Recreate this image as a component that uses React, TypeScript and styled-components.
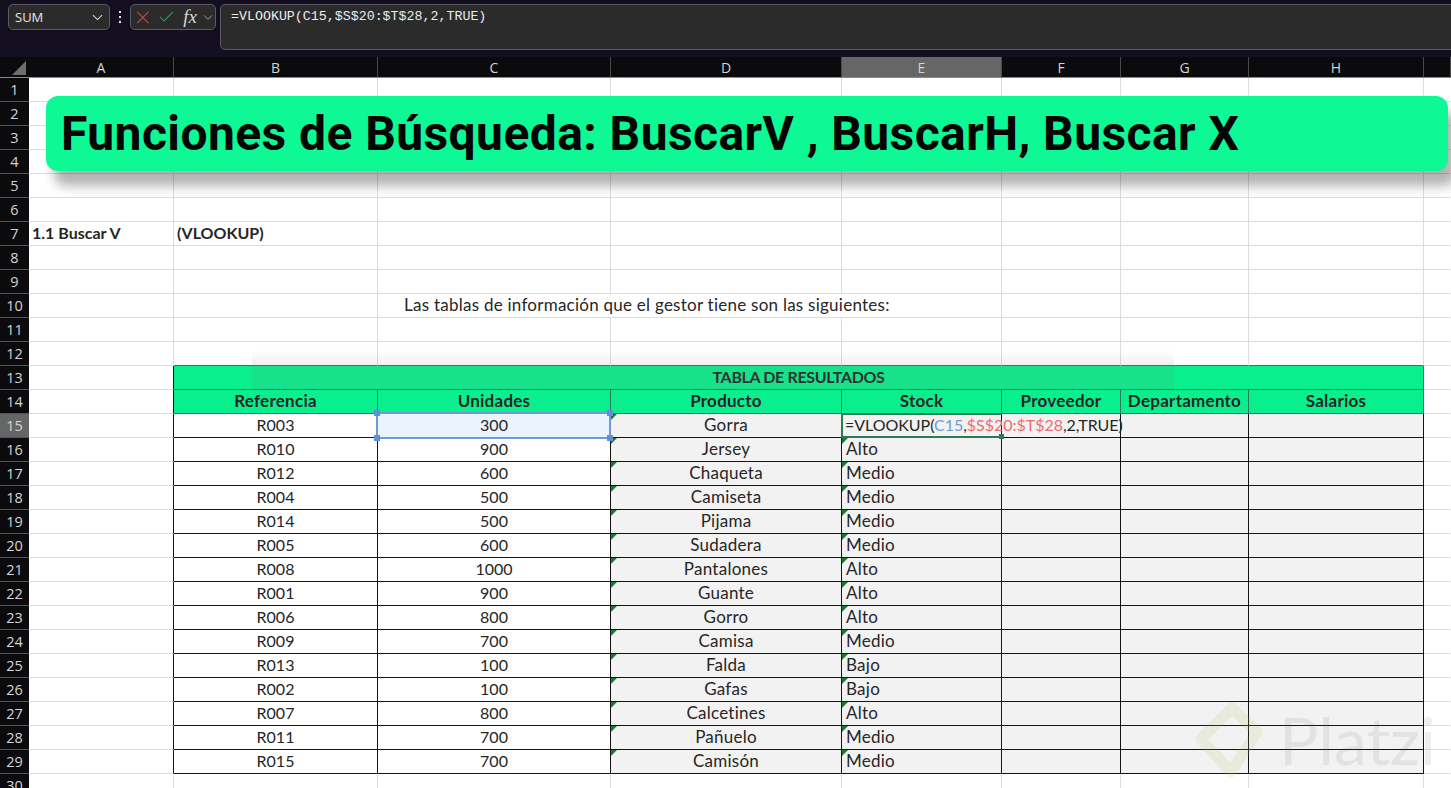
import React from 'react';
import styled, { createGlobalStyle } from 'styled-components';
import { ChevronDown, X, Check } from 'lucide-react';

const Global = createGlobalStyle`
  html, body { margin: 0; padding: 0; background: #fff; overflow: hidden; }
`;

const Page = styled.div`
  position: relative;
  width: 1451px;
  height: 788px;
  overflow: hidden;
  display: flex;
  flex-direction: column;
  font-family: "Lato", "Open Sans", sans-serif;
`;

const TopBar = styled.div`
  height: 57px;
  flex: none;
  box-sizing: border-box;
  padding: 4px 0 0 8px;
  background: #140f20;
  display: flex;
  align-items: flex-start;
`;

const NameBox = styled.div`
  width: 102px;
  height: 26px;
  box-sizing: border-box;
  border: 1px solid #5c5a60;
  border-radius: 5px;
  background: #2b2b2b;
  color: #e6e6e6;
  font: 13px "Open Sans", sans-serif;
  padding: 0 3px 0 6px;
  display: flex;
  align-items: center;
  justify-content: space-between;
`;

const Dots = styled.div`
  width: 20px;
  height: 26px;
  color: #e8e8e8;
  display: flex;
  align-items: center;
  justify-content: center;
`;

const FxBox = styled.div`
  width: 86px;
  height: 26px;
  box-sizing: border-box;
  border: 1px solid #5c5a60;
  border-radius: 5px;
  background: #2b2b2b;
  display: flex;
  align-items: center;
  padding: 0 0 0 1px;
  gap: 3px;
`;

const FxLabel = styled.span`
  font: italic 19px "Liberation Serif", serif;
  color: #d8d8d8;
  margin-left: 5px;
  margin-right: 1px;
`;

const FormulaBox = styled.div`
  flex: 1;
  height: 46px;
  margin-left: 4px;
  margin-right: -6px;
  box-sizing: border-box;
  border: 1px solid #5c5a60;
  border-radius: 5px;
  background: #2b2b2b;
  color: #ececec;
  font: 13.3px/24px "Liberation Mono", monospace;
  padding: 0 10px;
  white-space: nowrap;
`;

const Sheet = styled.div`
  display: grid;
  grid-template-columns: 29px 145px 204px 233px 231px 160px 119px 128px 175px 1fr;
  grid-template-rows: 21px;
  grid-auto-rows: 24px;
  background: #fff;
`;

const Corner = styled.div`
  background: #0b0a0c;
  border-bottom: 1px solid #8a8a8a;
  box-sizing: border-box;
  position: relative;
  &::after {
    content: '';
    position: absolute;
    right: 3px;
    bottom: 2px;
    border-style: solid;
    border-width: 0 0 14px 14px;
    border-color: transparent transparent #6e6e6e transparent;
  }
`;

const ColHead = styled.div<{ $active?: boolean }>`
  background: ${p => (p.$active ? '#666666' : '#0b0a0c')};
  color: #d4d4d4;
  border-right: 1px solid #4a4a4a;
  border-bottom: 1px solid #8a8a8a;
  box-sizing: border-box;
  font: 14px "Open Sans", sans-serif;
  display: flex;
  align-items: center;
  justify-content: center;
`;

const RowHead = styled.div<{ $active?: boolean }>`
  background: ${p => (p.$active ? '#666666' : '#0b0a0c')};
  color: #d4d4d4;
  border-bottom: 1px solid #55555a;
  box-sizing: border-box;
  font: 14.5px "Open Sans", sans-serif;
  display: flex;
  align-items: center;
  justify-content: center;
  overflow: hidden;
`;

const Cell = styled.div<{ $right?: string; $bottom?: string; $span?: number; $fill?: string; $bold?: boolean; $center?: boolean; $indent?: number; $code?: boolean }>`
  box-sizing: border-box;
  position: relative;
  grid-column: span ${p => p.$span ?? 1};
  background: ${p => p.$fill ?? '#fff'};
  border-right: 1px solid ${p => p.$right ?? '#dcdcdc'};
  border-bottom: 1px solid ${p => p.$bottom ?? '#dcdcdc'};
  color: #262626;
  font-size: ${p => (p.$code ? 16 : 17)}px;
  letter-spacing: ${p => (p.$code ? 0 : 0.25)}px;
  font-weight: ${p => (p.$bold ? 700 : 400)};
  display: flex;
  align-items: center;
  justify-content: ${p => (p.$center ? 'center' : 'flex-start')};
  padding-left: ${p => p.$indent ?? 0}px;
  padding-bottom: 2px;
  white-space: nowrap;
`;

const BannerTitle = styled.span`
  letter-spacing: -0.35px;
`;

const Flag = styled.span`
  position: absolute;
  left: 0;
  top: 0;
  border-style: solid;
  border-width: 6px 6px 0 0;
  border-color: #1c7a30 transparent transparent transparent;
`;

const Selection = styled.div`
  position: absolute;
  left: -2px;
  top: -2px;
  right: -1px;
  bottom: -2px;
  border: 2px solid #6f9ad8;
  z-index: 3;
`;

const Handle = styled.span<{ $x: 'left' | 'right'; $y: 'top' | 'bottom' }>`
  position: absolute;
  ${p => p.$x}: -4px;
  ${p => p.$y}: -4px;
  width: 6px;
  height: 6px;
  background: #5f8fd6;
`;

const Editor = styled.div`
  position: absolute;
  left: -1px;
  top: -1px;
  bottom: -1px;
  width: 161px;
  border-top: 2px solid #2d7a58;
  border-left: 2px solid #2d7a58;
  border-bottom: 2px solid #2d7a58;
  box-sizing: border-box;
  z-index: 3;
  display: flex;
  align-items: center;
  padding-left: 2px;
  padding-bottom: 3px;
  font-size: 16px;
  letter-spacing: -0.03px;
  color: #262626;
  &::after {
    content: '';
    position: absolute;
    right: -2px;
    bottom: -3px;
    width: 5px;
    height: 5px;
    background: #2d7a58;
  }
`;

const Caret = styled.span`
  display: inline-block;
  width: 1px;
  height: 19px;
  background: #111;
  margin-left: 1px;
`;

const Ref = styled.span<{ $color: string }>`
  color: ${p => p.$color};
`;

const Banner = styled.div`
  position: absolute;
  left: 46px;
  top: 96px;
  width: 1402px;
  height: 75px;
  box-sizing: border-box;
  padding: 0 0 0 15px;
  border-radius: 12px;
  background: #0ef896;
  box-shadow: 8px 15px 12px rgba(0, 0, 0, 0.3);
  color: #050505;
  font: 700 48px "Roboto", sans-serif;
  letter-spacing: 0.42px;
  display: flex;
  align-items: center;
  white-space: nowrap;
  z-index: 5;
`;

const Ghost = styled.div`
  position: absolute;
  left: 252px;
  top: 350px;
  width: 922px;
  height: 39px;
  background: linear-gradient(to bottom, rgba(128,128,128,0) 0, rgba(128,128,128,0.12) 15px);
  z-index: 4;
`;

const Mark = styled.div`
  position: absolute;
  left: 1194px;
  top: 698px;
  display: flex;
  align-items: center;
  gap: 13px;
  z-index: 4;
`;

const MarkWord = styled.span`
  font: 400 66px "Lato", sans-serif;
  color: rgba(90, 90, 90, 0.1);
  line-height: 84px;
`;

const headers = ['Referencia', 'Unidades', 'Producto', 'Stock', 'Proveedor', 'Departamento', 'Salarios'];
const data: [string, string, string, string][] = [
  ['R003', '300', 'Gorra', ''],
  ['R010', '900', 'Jersey', 'Alto'],
  ['R012', '600', 'Chaqueta', 'Medio'],
  ['R004', '500', 'Camiseta', 'Medio'],
  ['R014', '500', 'Pijama', 'Medio'],
  ['R005', '600', 'Sudadera', 'Medio'],
  ['R008', '1000', 'Pantalones', 'Alto'],
  ['R001', '900', 'Guante', 'Alto'],
  ['R006', '800', 'Gorro', 'Alto'],
  ['R009', '700', 'Camisa', 'Medio'],
  ['R013', '100', 'Falda', 'Bajo'],
  ['R002', '100', 'Gafas', 'Bajo'],
  ['R007', '800', 'Calcetines', 'Alto'],
  ['R011', '700', 'Pañuelo', 'Medio'],
  ['R015', '700', 'Camisón', 'Medio'],
];
const BLACK = '#151515';
const DARK = '#2a7a5c';
const GREY = '#f2f2f2';
const HEAD = '#0aef8e';

function tableRow(n: number) {
  if (n === 13) {
    return (
      <Cell key="t" $span={7} $fill={HEAD} $right={DARK} $bottom={DARK} $bold $center $code>
        <BannerTitle>TABLA DE RESULTADOS</BannerTitle>
      </Cell>
    );
  }
  if (n === 14) {
    return headers.map(h => (
      <Cell key={h} $fill={HEAD} $right={DARK} $bottom={DARK} $bold $center>
        {h}
      </Cell>
    ));
  }
  const [a, b, c, d] = data[n - 15];
  return (
    <React.Fragment key="b">
      <Cell $right={BLACK} $bottom={BLACK} $center $code>{a}</Cell>
      <Cell $right={BLACK} $bottom={BLACK} $center $code $fill={n === 15 ? '#ebf3fd' : undefined}>
        {b}
        {n === 15 && (
          <Selection>
            <Handle $x="left" $y="top" />
            <Handle $x="right" $y="top" />
            <Handle $x="left" $y="bottom" />
            <Handle $x="right" $y="bottom" />
          </Selection>
        )}
      </Cell>
      <Cell $right={BLACK} $bottom={BLACK} $center $fill={GREY}>
        <Flag />
        {c}
      </Cell>
      <Cell $right={BLACK} $bottom={BLACK} $fill={GREY} $indent={4}>
        {n === 15 ? (
          <Editor>
            <span>
              =VLOOKUP(<Ref $color="#6f9ad8">C15</Ref>,<Ref $color="#ee6a72">$S$20:$T$28</Ref>,2,TRUE)
            </span>
            <Caret />
          </Editor>
        ) : (
          <>
            <Flag />
            {d}
          </>
        )}
      </Cell>
      <Cell $right={BLACK} $bottom={BLACK} $fill={GREY} />
      <Cell $right={BLACK} $bottom={BLACK} $fill={GREY} />
      <Cell $right={BLACK} $bottom={BLACK} $fill={GREY} />
    </React.Fragment>
  );
}

function plainRow(n: number) {
  const bottom = n === 12 ? DARK : undefined;
  if (n === 7) {
    return (
      <React.Fragment key="p">
        <Cell $bold $code $indent={3}>(VLOOKUP)</Cell>
        {[0, 1, 2, 3, 4, 5].map(i => <Cell key={i} />)}
      </React.Fragment>
    );
  }
  if (n === 10) {
    return (
      <React.Fragment key="p">
        <Cell />
        <Cell $span={3} $indent={26}>Las tablas de información que el gestor tiene son las siguientes:</Cell>
        <Cell />
        <Cell />
        <Cell />
      </React.Fragment>
    );
  }
  return [0, 1, 2, 3, 4, 5, 6].map(i => <Cell key={i} $bottom={bottom} />);
}

export default function App() {
  const rows = Array.from({ length: 30 }, (_, i) => i + 1);
  const inTable = (n: number) => n >= 13 && n <= 29;
  return (
    <Page>
      <Global />
      <TopBar>
        <NameBox>
          SUM
          <ChevronDown size={17} strokeWidth={1.5} color="#d0d0d0" />
        </NameBox>
        <Dots>
          <svg width="4" height="14" viewBox="0 0 4 14" fill="#e8e8e8">
            <rect x="1" y="1" width="2" height="2" />
            <rect x="1" y="6" width="2" height="2" />
            <rect x="1" y="11" width="2" height="2" />
          </svg>
        </Dots>
        <FxBox>
          <X size={23} strokeWidth={1.2} color="#c9484a" />
          <Check size={20} strokeWidth={1.3} color="#3f9a58" />
          <FxLabel>fx</FxLabel>
          <ChevronDown size={15} strokeWidth={1.3} color="#c8c8c8" />
        </FxBox>
        <FormulaBox>=VLOOKUP(C15,$S$20:$T$28,2,TRUE)</FormulaBox>
      </TopBar>
      <Sheet>
        <Corner />
        {['A', 'B', 'C', 'D', 'E', 'F', 'G', 'H'].map(c => (
          <ColHead key={c} $active={c === 'E'}>{c}</ColHead>
        ))}
        <ColHead />
        {rows.map(n => (
          <React.Fragment key={n}>
            <RowHead $active={n === 15}>{n}</RowHead>
            <Cell $right={inTable(n) ? BLACK : undefined} $bold={n === 7} $code={n === 7} $indent={3}>
              {n === 7 ? '1.1 Buscar V' : ''}
            </Cell>
            {inTable(n) ? tableRow(n) : plainRow(n)}
            <Cell $right="transparent" />
          </React.Fragment>
        ))}
      </Sheet>
      <Banner>Funciones de Búsqueda: BuscarV , BuscarH, Buscar X</Banner>
      <Ghost />
      <Mark>
        <svg width="72" height="84" viewBox="0 0 72 84" fill="none">
          <path
            d="M38 10 L63 34 L37 74 L7 41 Z"
            stroke="rgba(170,190,90,0.14)"
            strokeWidth="11"
            strokeLinejoin="round"
          />
        </svg>
        <MarkWord>Platzi</MarkWord>
      </Mark>
    </Page>
  );
}
